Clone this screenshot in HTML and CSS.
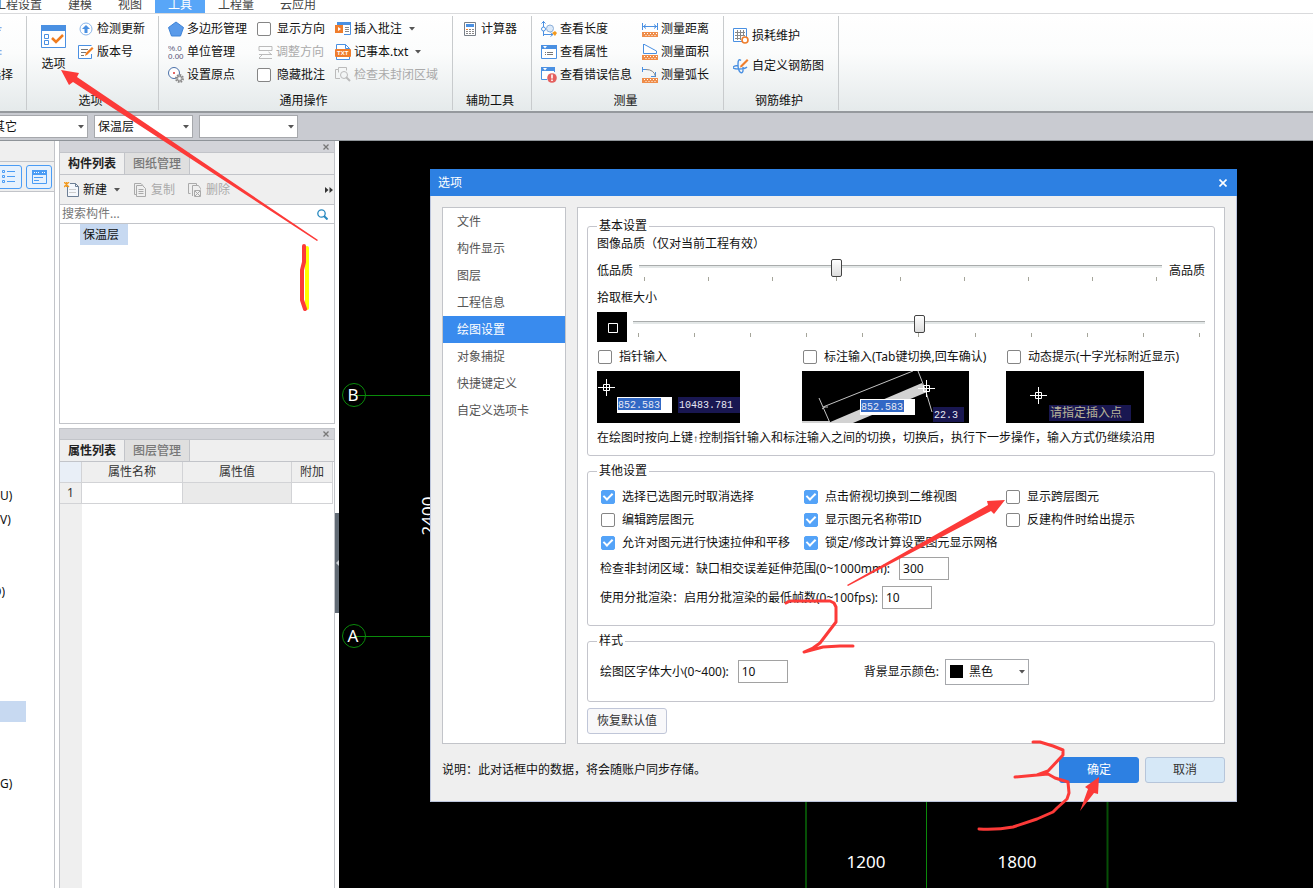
FILE: index.html
```html
<!DOCTYPE html>
<html lang="zh-CN">
<head>
<meta charset="utf-8">
<title>选项</title>
<link rel="stylesheet" href="styles.css">
</head>
<body>
<svg class="defs" aria-hidden="true">
  <symbol id="caret" viewBox="0 0 6 4"><path d="M0 0h6L3 3.500z" fill="#555"/></symbol>
  <symbol id="ruler" viewBox="0 0 16 16"><path d="M0 11h16v5H0z" fill="#ef8d4a"/><path d="M2 12.500h1M5 12.500h1M8 12.500h1M11 12.500h1M14 12.500h1M3.500 14.500h1M6.500 14.500h1M9.500 14.500h1M12.500 14.500h1" stroke="#fff"/></symbol>
  <symbol id="cross" viewBox="0 0 17 17"><path d="M8.500 0v17M0 8.500h17M5.500 5.500h6v6h-6z" fill="none" stroke="#fff"/></symbol>
</svg>

<nav class="menu">
  <button class="menu-tab">工程设置</button>
  <button class="menu-tab">建模</button>
  <button class="menu-tab">视图</button>
  <button class="menu-tab is-active">工具</button>
  <button class="menu-tab">工程量</button>
  <button class="menu-tab">云应用</button>
</nav>

<div class="ribbon">
  <section class="group group-cut">
    <div class="col">
      <button class="tool"><svg class="icon icon-cut" viewBox="0 0 16 16"><path d="M0 6.500h3M0 9.500h2" stroke="#4a90e2"/></svg></button>
      <button class="tool"><svg class="icon icon-cut" viewBox="0 0 16 16"><path d="M0 6.500h3M0 10.500h3" stroke="#4a90e2"/></svg></button>
      <button class="tool">选择</button>
    </div>
  </section>

  <section class="group">
    <div class="cols cols-wide">
      <button class="tool-big">
        <svg width="25" height="23" viewBox="0 0 25 23"><path d="M.5.5h24v22H.5z" fill="#fff" stroke="#4a90e2"/><path d="M0 0h25v6H0z" fill="#4a90e2"/><path d="M3.500 9.500h4v4h-4zM3.500 15.500h4v4h-4z" fill="none" stroke="#4a90e2"/><path d="M11 13l4 4 7-7" fill="none" stroke="#f07c1e" stroke-width="2.500"/></svg>
        选项
      </button>
      <div class="col">
        <button class="tool"><svg class="icon" viewBox="0 0 16 16"><circle cx="8" cy="8" r="6" fill="#fff" stroke="#8ab6ea"/><path d="M8 4l4 4H9.500v4h-3V8H4z" fill="#4a90e2"/></svg>检测更新</button>
        <button class="tool"><svg class="icon" viewBox="0 0 16 16"><path d="M13.500 10v4.500H.5v-13h13" fill="#fff" stroke="#4a90e2"/><path d="M3 5.500h7M3 8.500h5M3 11.500h3" stroke="#777"/><path d="M14 3l1.500 1.500-6 6L7 12l.8-3z" fill="#f07c1e"/></svg>版本号</button>
      </div>
    </div>
    <h2 class="group-name">选项</h2>
  </section>

  <section class="group">
    <div class="cols">
      <div class="col">
        <button class="tool"><svg class="icon" viewBox="0 0 16 16"><path d="M8 1l7.500 5.500-3 8.500h-9l-3-8.500z" fill="#5a9bea" stroke="#3f83d6"/></svg>多边形管理</button>
        <button class="tool"><svg class="icon" viewBox="0 0 16 16"><text class="glyph" x="0" y="7">%.0</text><text class="glyph" x="0" y="15">0.00</text></svg>单位管理</button>
        <button class="tool"><svg class="icon" viewBox="0 0 16 16"><circle cx="6" cy="6" r="5.500" fill="#fff" stroke="#4a70a8"/><circle cx="6" cy="6" r="1" fill="#d33"/><circle cx="11.500" cy="11.500" r="3.500" fill="#eee" stroke="#888" stroke-width="2" stroke-dasharray="1.600 1.100"/><circle cx="11.500" cy="11.500" r="2.500" fill="#ccc" stroke="#888"/><circle cx="11.500" cy="11.500" r="1" fill="#fff"/></svg>设置原点</button>
      </div>
      <div class="col">
        <label class="check tool-check"><input type="checkbox">显示方向</label>
        <button class="tool" disabled><svg class="icon" viewBox="0 0 16 16"><path d="M2 2.500h13v4H2zM2 10.500h13M11.500 8l3 2.500M5 11l-3 3M2 14.500h13" fill="none" stroke="#bbb"/></svg>调整方向</button>
        <label class="check tool-check"><input type="checkbox">隐藏批注</label>
      </div>
      <div class="col">
        <button class="tool"><svg class="icon" viewBox="0 0 16 16"><path d="M2 1.500h13.500v12H9" fill="#fff" stroke="#4a90e2"/><path d="M2 1h14v3H2z" fill="#4a90e2"/><path d="M10 6.500h4M10 8.500h4M10 10.500h4" stroke="#888"/><path d="M0 4h8v8H0z" fill="#ef7d2b"/><path d="M3 6l3 2-3 2z" fill="#fff"/></svg>插入批注<svg class="drop"><use href="#caret"/></svg></button>
        <button class="tool"><svg class="icon" viewBox="0 0 16 16"><path d="M1.500 15.500V.5h9l4 4v11z" fill="#fff" stroke="#4a90e2"/><path d="M10.500.5v4h4" fill="none" stroke="#4a90e2"/><rect y="5" width="16" height="8" rx="1" fill="#ef7d2b"/><text class="glyph-txt" x="2" y="11">TXT</text></svg>记事本.txt<svg class="drop"><use href="#caret"/></svg></button>
        <button class="tool" disabled><svg class="icon" viewBox="0 0 16 16"><path d="M5 11.500H.5v-9h3V.5h8v3M3.500 2.500v3" fill="none" stroke="#bbb"/><circle cx="9" cy="8" r="3.500" fill="none" stroke="#bbb"/><path d="M11 10l4 4" stroke="#bbb" stroke-width="2"/></svg>检查未封闭区域</button>
      </div>
    </div>
    <h2 class="group-name">通用操作</h2>
  </section>

  <section class="group">
    <div class="cols">
      <div class="col">
        <button class="tool"><svg class="icon" viewBox="0 0 16 16"><path d="M2.500 1.500h11v13h-11z" fill="#fff" stroke="#777f88"/><path d="M4 3h8v3H4z" fill="#4a90e2"/><path d="M4 8.500h2" stroke="#ef7d2b"/><path d="M7 8.500h2M10 8.500h2M4 10.500h2M4 12.500h2M7 10.500h2M10 10.500h2M7 12.500h2M10 12.500h2" stroke="#888"/></svg>计算器</button>
      </div>
    </div>
    <h2 class="group-name">辅助工具</h2>
  </section>

  <section class="group">
    <div class="cols">
      <div class="col">
        <button class="tool"><svg class="icon" viewBox="0 0 16 16"><path d="M2.500 0v15M.5 2.500l2-2 2 2M2 13.500h10M9.500 11.500l2.500 2-2.500 2" fill="none" stroke="#4a90e2"/><circle cx="2.500" cy="8" r="2" fill="#fff" stroke="#4a90e2"/><circle cx="9" cy="7.500" r="3.500" fill="#dce9f8" stroke="#8aaed8"/><path d="M11 12l3-2 2 2-2 3z" fill="#f39a1e"/></svg>查看长度</button>
        <button class="tool"><svg class="icon" viewBox="0 0 16 16"><path d="M.5 1.500h15v13H.5z" fill="#fff" stroke="#4a90e2"/><path d="M0 1h16v4H0z" fill="#4a90e2"/><path d="M2 2h4L4 4.500z" fill="#fff"/><path d="M4 8.500h1M4 10.500h1M6 8.500h6M6 10.500h6" stroke="#777"/></svg>查看属性</button>
        <button class="tool"><svg class="icon" viewBox="0 0 16 16"><path d="M6 12.500H.5V1h13v4" fill="#fff" stroke="#4a90e2"/><path d="M0 0h14v4H0z" fill="#4a90e2"/><path d="M2 1h4L4 3.500z" fill="#fff"/><circle cx="11" cy="11" r="4.800" fill="#e4605f"/><path d="M11 7.500v4M11 12.500v1.500" stroke="#fff" stroke-width="1.600"/></svg>查看错误信息</button>
      </div>
      <div class="col">
        <button class="tool"><svg class="icon" viewBox="0 0 16 16"><use href="#ruler" width="16" height="16"/><path d="M.5 2v7M15.500 2v7M1 5.500h14M4 3.500l-2.500 2L4 7.500M12 3.500l2.500 2-2.500 2" fill="none" stroke="#4a90e2"/></svg>测量距离</button>
        <button class="tool"><svg class="icon" viewBox="0 0 16 16"><use href="#ruler" width="16" height="16"/><path d="M1.500 0v9.500h13V7z" fill="#fff" stroke="#4a90e2"/></svg>测量面积</button>
        <button class="tool"><svg class="icon" viewBox="0 0 16 16"><use href="#ruler" width="16" height="16"/><path d="M.5 0v5M0 2.500h4M9 9.500h5M13.500 5v5" fill="none" stroke="#4a90e2"/><path d="M4 2.500q8 0 9.500 7" fill="none" stroke="#888"/></svg>测量弧长</button>
      </div>
    </div>
    <h2 class="group-name">测量</h2>
  </section>

  <section class="group">
    <div class="cols">
      <div class="col col-loose">
        <button class="tool"><svg class="icon" viewBox="0 0 16 16"><path d="M.5.5h13v13H.5z" fill="#fff" stroke="#4a90e2"/><path d="M4.500 2v10M7.500 2v10M10.500 2v6M2 4.500h10M2 7.500h10M2 10.500h6" stroke="#888"/><circle cx="12" cy="12" r="3" fill="#fff" stroke="#ef7d2b" stroke-width="1.600"/></svg>损耗维护</button>
        <button class="tool"><svg class="icon" viewBox="0 0 16 16"><path d="M8 2.500Q5 0 5 6t2 8 3-1V9M5 7.500Q0 8 0 9.500t6 1.500 8-2" fill="none" stroke="#4a90e2" stroke-width="1.400"/><path d="M14 1l1.500 1.500L9 9l-2 .5.500-2z" fill="#ef7d2b"/></svg>自定义钢筋图</button>
      </div>
    </div>
    <h2 class="group-name">钢筋维护</h2>
  </section>
</div>

<div class="filters">
  <span class="combo combo-cut"><select aria-label="类别"><option>其它</option></select><svg class="combo-caret"><use href="#caret"/></svg></span>
  <span class="combo"><select aria-label="构件类型"><option>保温层</option></select><svg class="combo-caret"><use href="#caret"/></svg></span>
  <span class="combo"><select aria-label="构件"><option></option></select><svg class="combo-caret"><use href="#caret"/></svg></span>
</div>

<main class="work">
  <aside class="side">
    <div class="side-head"></div>
    <div class="side-views">
      <button class="view" aria-label="列表"><svg width="14" height="14" viewBox="0 0 14 14"><path d="M.5.500h2v2h-2zM.5 5.500h2v2h-2zM.5 10.500h2v2h-2zM5 1.500h8M5 6.500h8M5 11.500h8" fill="none" stroke="#4a9cf5"/></svg></button>
      <button class="view" aria-label="详图"><svg width="15" height="14" viewBox="0 0 15 14"><path d="M.5.500h14v13H.5z" fill="none" stroke="#4a9cf5"/><path d="M0 0h15v5H0z" fill="#4a9cf5"/><path d="M2 2.500h6M10 2.500h3" stroke="#fff" stroke-dasharray="1 1"/><path d="M2 7.500h9M2 10.500h5" stroke="#4a9cf5"/></svg></button>
    </div>
    <ul class="tree">
      <li>U)</li>
      <li>V)</li>
      <li></li>
      <li></li>
      <li class="is-short"><span>D)</span></li>
      <li></li>
      <li></li>
      <li></li>
      <li></li>
      <li class="is-selected"></li>
      <li></li>
      <li></li>
      <li>G)</li>
    </ul>
  </aside>

  <div class="docks">
    <section class="dock">
      <header class="dock-bar"><button class="dock-close" aria-label="关闭"><svg width="6" height="6" viewBox="0 0 6 6"><path d="M.5.5l5 5M5.500.5l-5 5" stroke="#777" stroke-width="1.300"/></svg></button></header>
      <div class="tabs"><button class="tab is-active">构件列表</button><button class="tab">图纸管理</button></div>
      <div class="actions">
        <button class="action"><svg class="icon" viewBox="0 0 16 16"><path d="M3.500 4v10.500h11v-10l-3-3H6" fill="#f5f8fc" stroke="#6d7f95"/><path d="M11.500 1.500v3h3" fill="none" stroke="#6d7f95"/><path d="M5 7.500h7M5 10.500h7" stroke="#ccc"/><path d="M0 0l5 5M5 0L0 5M2.500 0v5" stroke="#f39a1e" stroke-width="1.300"/></svg>新建<svg class="drop"><use href="#caret"/></svg></button>
        <button class="action" disabled><svg class="icon" viewBox="0 0 16 16"><path d="M4.500 3.500h6l3 3v8h-9zM4 12.500H2.500v-11H9l2 2M6.500 7.500h5M6.500 9.500h5M6.500 11.500h5" fill="none" stroke="#aaa"/></svg>复制</button>
        <button class="action" disabled><svg class="icon" viewBox="0 0 16 16"><path d="M3.500 11.500h-2v-10h8v2M5.500 14V3.500h6l2 3v1" fill="none" stroke="#aaa"/><path d="M7.500 8.500h6v6h-6zM8 9l5 5M13 9l-5 5" fill="none" stroke="#aaa"/></svg>删除</button>
        <button class="action more" aria-label="更多"><svg width="8" height="6" viewBox="0 0 8 6"><path d="M0 0l3.500 3L0 6zM4.500 0L8 3 4.500 6z" fill="#333"/></svg></button>
      </div>
      <div class="search">
        <input type="text" placeholder="搜索构件..." aria-label="搜索构件">
        <svg width="11" height="11" viewBox="0 0 11 11"><circle cx="4.500" cy="4.500" r="3.700" fill="none" stroke="#2a8ac0" stroke-width="1.300"/><path d="M7 7l3.500 3.500" stroke="#2a8ac0" stroke-width="2"/></svg>
      </div>
      <ul class="parts"><li>保温层</li></ul>
    </section>

    <section class="dock dock-props">
      <header class="dock-bar"><button class="dock-close" aria-label="关闭"><svg width="6" height="6" viewBox="0 0 6 6"><path d="M.5.5l5 5M5.500.5l-5 5" stroke="#777" stroke-width="1.300"/></svg></button></header>
      <div class="tabs"><button class="tab is-active">属性列表</button><button class="tab">图层管理</button></div>
      <div class="props-area">
        <table class="props">
          <colgroup><col class="c-num"><col class="c-name"><col class="c-value"><col class="c-extra"></colgroup>
          <thead><tr><th class="corner"></th><th>属性名称</th><th>属性值</th><th>附加</th></tr></thead>
          <tbody><tr><th>1</th><td></td><td class="is-locked"></td><td></td></tr></tbody>
        </table>
      </div>
    </section>
  </div>

  <button class="splitter" aria-label="折叠"><svg width="3" height="6" viewBox="0 0 3 6"><path d="M3 0v6L0 3z" fill="#cfd3d8"/></svg></button>

  <div class="canvas">
    <svg class="drawing">
      <g fill="none" stroke="#0a8a0a">
        <circle cx="15" cy="254" r="11.500"/><path d="M15 254.500h82"/>
        <circle cx="15" cy="495" r="11.500"/><path d="M15 495.500h82"/>
        <path d="M467 655v400M768.500 655v400" stroke="#064f06" stroke-width="2"/>
        <path d="M587.500 655v400"/>
      </g>
      <g class="drawing-text">
        <text x="14" y="260">B</text>
        <text x="14" y="501">A</text>
        <text x="527" y="727">1200</text>
        <text x="678" y="727">1800</text>
        <text transform="translate(95 375) rotate(-90)">2400</text>
      </g>
    </svg>

    <section class="dialog" role="dialog" aria-label="选项">
      <header class="dialog-title">选项<button class="dialog-close" aria-label="关闭"><svg width="8" height="8" viewBox="0 0 8 8"><path d="M.5.5l7 7M7.500.5l-7 7" stroke="#fff" stroke-width="1.600"/></svg></button></header>
      <div class="dialog-body">
        <nav class="pages">
          <button class="page">文件</button>
          <button class="page">构件显示</button>
          <button class="page">图层</button>
          <button class="page">工程信息</button>
          <button class="page is-active">绘图设置</button>
          <button class="page">对象捕捉</button>
          <button class="page">快捷键定义</button>
          <button class="page">自定义选项卡</button>
        </nav>
        <div class="settings">
          <fieldset class="box basic">
            <legend>基本设置</legend>
            <div class="line">图像品质（仅对当前工程有效）</div>
            <div class="quality">
              <span>低品质</span>
              <div class="slider"><input type="range" min="0" max="8" value="3" aria-label="图像品质"><div class="ticks"><i></i><i></i><i></i><i></i><i></i><i></i><i></i><i></i><i></i></div></div>
              <span>高品质</span>
            </div>
            <div class="line">拾取框大小</div>
            <div class="pick">
              <svg width="30" height="30" viewBox="0 0 30 30"><path d="M0 0h30v30H0z"/><path d="M11.500 11.500h9v9h-9z" fill="none" stroke="#fff"/></svg>
              <div class="slider"><input type="range" min="0" max="10" value="5" aria-label="拾取框大小"><div class="ticks"><i></i><i></i><i></i><i></i><i></i><i></i><i></i><i></i><i></i><i></i><i></i></div></div>
            </div>
            <div class="inputs">
              <div class="mode">
                <label class="check"><input type="checkbox">指针输入</label>
                <svg width="143" height="52" viewBox="0 0 143 52"><path d="M0 0h143v52H0z"/><use href="#cross" x="1" y="8" width="17" height="17"/><path d="M20 26h55v16H20z" fill="#fff"/><path d="M21 27h43v12H21z" fill="#3168c5"/><path d="M81 26h62v16H81z" fill="#191751"/><text class="readout" x="21" y="37">852.583</text><text class="readout" x="82" y="37">10483.781</text></svg>
              </div>
              <div class="mode">
                <label class="check"><input type="checkbox">标注输入(Tab键切换,回车确认)</label>
                <svg width="167" height="52" viewBox="0 0 167 52"><path d="M0 0h167v52H0z"/><path d="M120 12l5 9-74 31H26z" fill="#d2d2d2"/><path d="M0 51h28" stroke="#d2d2d2" stroke-width="2"/><path d="M111 0L21 36M116 0q8 18 14 41M17 27l11 25M20 38q3-3 6-2" fill="none" stroke="#c4c4c4"/><use href="#cross" x="116" y="9" width="17" height="17"/><path d="M58 28h55v16H58z" fill="#fff"/><path d="M59 29h43v12H59z" fill="#3168c5"/><path d="M131 36h31v15h-31z" fill="#191751"/><text class="readout" x="59" y="39">852.583</text><text class="readout" x="132" y="47">22.3</text></svg>
              </div>
              <div class="mode">
                <label class="check"><input type="checkbox">动态提示(十字光标附近显示)</label>
                <svg width="138" height="52" viewBox="0 0 138 52"><path d="M0 0h138v52H0z"/><use href="#cross" x="24" y="16" width="17" height="17"/><path d="M43 34h82v16H43z" fill="#191751"/><text class="hint" x="44" y="46">请指定插入点</text></svg>
              </div>
            </div>
            <div class="line line-note">在绘图时按向上键<span class="arrow">↑</span>控制指针输入和标注输入之间的切换，切换后，执行下一步操作，输入方式仍继续沿用</div>
          </fieldset>

          <fieldset class="box other">
            <legend>其他设置</legend>
            <div class="flags">
              <label class="check"><input type="checkbox" checked>选择已选图元时取消选择</label>
              <label class="check"><input type="checkbox" checked>点击俯视切换到二维视图</label>
              <label class="check"><input type="checkbox">显示跨层图元</label>
              <label class="check"><input type="checkbox">编辑跨层图元</label>
              <label class="check"><input type="checkbox" checked>显示图元名称带ID</label>
              <label class="check"><input type="checkbox">反建构件时给出提示</label>
              <label class="check"><input type="checkbox" checked>允许对图元进行快速拉伸和平移</label>
              <label class="check"><input type="checkbox" checked>锁定/修改计算设置图元显示网格</label>
            </div>
            <div class="field field-wide"><label for="gap">检查非封闭区域：缺口相交误差延伸范围(0~1000mm):</label><input id="gap" class="num" type="text" value="300"></div>
            <div class="field field-tight"><label for="fps">使用分批渲染：启用分批渲染的最低帧数(0~100fps):</label><input id="fps" class="num" type="text" value="10"></div>
          </fieldset>

          <fieldset class="box style">
            <legend>样式</legend>
            <div class="style-row">
              <div class="field field-wide"><label for="font">绘图区字体大小(0~400):</label><input id="font" class="num" type="text" value="10"></div>
              <div class="field"><label for="bg">背景显示颜色:</label><span class="combo combo-color"><select id="bg"><option>黑色</option></select><i class="swatch"></i><svg class="combo-caret"><use href="#caret"/></svg></span></div>
            </div>
          </fieldset>
          <button class="btn">恢复默认值</button>
        </div>
      </div>
      <footer class="dialog-foot">
        <span class="foot-note">说明：此对话框中的数据，将会随账户同步存储。</span>
        <button class="btn btn-primary">确定</button>
        <button class="btn btn-cancel">取消</button>
      </footer>
    </section>
  </div>
</main>

<svg class="marks" aria-hidden="true">
  <g fill="#fc3a38">
    <path d="M61 70l18 3-2 4 241 163-1 1L73 82l-4 3z"/>
    <path d="M1005 500l-11 14-3-3-143 75-1-1 141-80-1-4z"/>
    <path d="M1099 777l-1 17-4-1-14 18 8-22-3-2z"/>
  </g>
  <path d="M307 248v60" stroke="#ffff00" stroke-width="4" stroke-linecap="round"/>
  <g fill="none" stroke="#fc3a38" stroke-width="3" stroke-linecap="round" stroke-linejoin="round">
    <path d="M304 246v16l-2 8v30l3 9" stroke-width="4"/>
    <path d="M786 603l4-2h40l4 2 2 4v15l-16 21-7 5-9 4 19-5 17-1h13"/>
    <path d="M1033 742h7l13 4 10 4v5l-15 16-11 4-22 2 33-3 7 4 13 4 1 11-2 6-10 9-4 4-16 7-24 8q-16 3-34 2"/>
  </g>
</svg>
</body>
</html>
```

FILE: styles.css
```css
* { box-sizing: border-box; }

body {
  margin: 0;
  position: relative;
  display: flex;
  flex-direction: column;
  height: 100vh;
  overflow: hidden;
  background: #fff;
  color: #111;
  font: 12px/18px "Noto Sans", "Noto Sans CJK SC", sans-serif;
}

button, input, select {
  margin: 0;
  padding: 0;
  border: 0;
  background: none;
  color: inherit;
  font: inherit;
}

button { white-space: nowrap; }
svg { flex: none; }
ul { margin: 0; padding: 0; list-style: none; }

.defs { position: absolute; width: 0; height: 0; }

/* Menu */
.menu {
  display: flex;
  align-items: flex-end;
  flex: none;
  height: 14px;
  margin-left: -19px;
  border-bottom: 1px solid #d9dadc;
}
.menu-tab { padding: 0 13px; line-height: 16px; color: #444; }
.menu-tab.is-active { background: #58a6f8; color: #fff; }

/* Ribbon */
.ribbon {
  display: flex;
  flex: none;
  height: 99px;
  padding: 2px 0 1px;
  border-bottom: 2px solid #95999d;
  background: linear-gradient(#fff 0%, #fbfcfc 40%, #e5eaeb 100%);
}
.group {
  display: flex;
  flex-direction: column;
  justify-content: space-between;
  padding: 1px 13px 0 9px;
  border-right: 1px solid #c8cbcd;
}
.group-cut { width: 27px; padding: 1px 13px 0 0; align-items: flex-end; }
.group-cut .col { align-items: flex-end; }
.group-name { margin: 0; font-size: 12px; font-weight: 400; line-height: 18px; text-align: center; }
.cols { display: flex; gap: 10px; padding-right: 1px; }
.cols-wide { gap: 12px; padding: 0 0 0 5px; }
.col { display: flex; flex-direction: column; align-items: flex-start; }
.col-loose { padding-top: 7px; gap: 7px; }
.tool { display: flex; align-items: center; gap: 3px; height: 23px; }
.tool:disabled, .action:disabled { color: #aaa; }
.tool-big { display: flex; flex-direction: column; align-items: center; gap: 7px; padding-top: 8px; }
.icon { width: 16px; height: 16px; }
.icon-cut { width: 14px; }
.drop { width: 6px; height: 4px; margin-left: 4px; }
.glyph { font: 8px "Liberation Sans", sans-serif; fill: #557; }
.glyph-txt { font: bold 6px "Liberation Sans", sans-serif; fill: #fff; }

.check { display: flex; align-items: center; gap: 7px; white-space: nowrap; }
.check input {
  appearance: none;
  flex: none;
  display: grid;
  place-items: center;
  width: 14px;
  height: 14px;
  border: 1px solid #858585;
  border-radius: 2px;
  background: #fff;
}
.check input:checked { border-color: #54a3f8; background: #54a3f8; }
.check input:checked::before {
  content: "";
  width: 4px;
  height: 7px;
  margin-bottom: 2px;
  border: solid #fff;
  border-width: 0 2px 2px 0;
  transform: rotate(45deg);
}
.tool-check { gap: 6px; height: 23px; }

/* Filter bar */
.filters {
  display: flex;
  align-items: center;
  gap: 6px;
  flex: none;
  height: 28px;
  border-bottom: 1px solid #8f9499;
  background: #c9cbd1;
}
.combo { display: grid; align-items: center; width: 99px; height: 23px; }
.combo > * { grid-area: 1 / 1; }
.combo select {
  appearance: none;
  width: 100%;
  height: 100%;
  padding: 0 16px 0 3px;
  border: 1px solid #a6a8ac;
  background: #fff;
}
.combo-caret { justify-self: end; width: 6px; height: 4px; margin-right: 4px; pointer-events: none; }
.combo-cut { margin-left: -11px; }

/* Work area */
.work { display: flex; flex: 1; min-height: 0; background: #fff; }

.side {
  display: flex;
  flex-direction: column;
  flex: none;
  width: 55px;
  border-right: 1px solid #c2c4c9;
}
.side-head { height: 21px; border-bottom: 1px solid #c2c4c9; background: #efefef; }
.side-views {
  display: flex;
  align-items: center;
  gap: 4px;
  height: 30px;
  margin-left: -4px;
  border-bottom: 1px solid #c2c4c9;
  background: #efefef;
}
.view {
  display: grid;
  place-items: center;
  width: 26px;
  height: 24px;
  border: 1px solid #4a9cf5;
  border-radius: 3px;
  background: #e6f1fd;
}
.tree { padding-top: 292px; }
.tree li { height: 24px; line-height: 24px; overflow: hidden; }
.tree .is-short { display: flex; justify-content: flex-end; width: 5px; }
.tree .is-selected { width: 26px; height: 21px; margin: 1px 0 2px; background: #c7d9f1; }

.docks { display: flex; flex-direction: column; gap: 4px; flex: none; width: 276px; margin-left: 4px; }
.dock { display: flex; flex-direction: column; flex: none; height: 283px; border: 1px solid #c2c4c9; border-top: 0; }
.dock-bar { display: flex; align-items: center; justify-content: flex-end; flex: none; height: 12px; padding-right: 5px; border-bottom: 1px solid #c2c4c9; background: #d3d4d9; }
.dock-props { flex: 1; height: auto; border-bottom: 0; border-top: 1px solid #c2c4c9; }
.dock-props .dock-bar { height: 11px; }
.dock-close { display: flex; }
.tabs { display: flex; flex: none; height: 22px; border-bottom: 1px solid #c2c4c9; background: #efefef; }
.tab { padding: 0 8px; border-right: 1px solid #c2c4c9; background: #dfdfdf; color: #777; font-weight: 500; }
.tab.is-active { background: #efefef; color: #222; font-weight: 700; }
.actions { display: flex; align-items: center; gap: 12px; flex: none; height: 30px; padding: 0 1px 0 4px; border-bottom: 1px solid #c2c4c9; background: #efefef; }
.action { display: flex; align-items: center; gap: 3px; }
.action.more { margin-left: auto; }
.search { display: flex; align-items: center; flex: none; height: 19px; padding: 0 6px 0 2px; border-bottom: 1px solid #c2c4c9; }
.search input { flex: 1; min-width: 0; outline: 0; }
.search input::placeholder { color: #777; opacity: 1; }
.parts li { width: 48px; margin-left: 20px; padding-left: 3px; line-height: 21px; background: #c7d9f1; }

.props-area { flex: 1; background: linear-gradient(90deg, #efefef 22px, #fff 22px); }
.props { width: 273px; border-collapse: separate; border-spacing: 0; table-layout: fixed; }
.c-num { width: 22px; }
.c-name { width: 101px; }
.c-value { width: 109px; }
.c-extra { width: 41px; }
.props th, .props td { height: 21px; padding: 0; border-right: 1px solid #d2d3d6; border-bottom: 1px solid #d2d3d6; color: #333; font-weight: 400; line-height: 20px; background: #efefef; }
.props td { background: #fff; }
.props .corner { background: #e9eff7; }
.props .is-locked { background: #eaeaea; }

.splitter { display: grid; place-items: center end; flex: none; width: 4px; height: 100px; margin-top: 372px; background: #626b75; }

.canvas { position: relative; flex: 1; min-width: 0; overflow: hidden; background: #000; }
.drawing { display: block; width: 100%; height: 100%; }
.drawing-text { fill: #fff; font-size: 17px; text-anchor: middle; }

/* Options window, floating over the drawing */
.dialog {
  position: absolute;
  top: 28px;
  left: 91px;
  right: 76px;
  min-width: 760px;
  border: 1px solid #bcc5dc;
  border-top: 0;
  background: #efefef;
}
.dialog-title {
  display: flex;
  align-items: center;
  justify-content: space-between;
  height: 27px;
  margin: 0 -1px;
  padding: 0 10px 0 8px;
  background: #2d80e2;
  color: #fff;
}
.dialog-close { display: flex; }
.dialog-body { display: flex; gap: 11px; padding: 11px 11px 0; }
.pages { display: flex; flex-direction: column; flex: none; width: 124px; border: 1px solid #c2c4c9; background: #fff; }
.page { height: 27px; padding-left: 14px; text-align: left; color: #555; }
.page.is-active { background: #398bee; color: #fff; }
.settings { flex: 1; min-width: 0; padding: 10px 9px 9px; border: 1px solid #c2c4c9; background: #fff; }

.box { min-width: 0; margin: 0 0 7px; padding: 0 9px; border: 1px solid #c4c5cc; border-radius: 3px; }
.box legend { padding: 0 2px; line-height: 16px; }
.basic { display: grid; gap: 5px; padding-top: 1px; padding-bottom: 7px; }
.line { white-space: nowrap; }
.line-note { height: 20px; line-height: 20px; }
.arrow { font: 10px/10px "Liberation Mono", monospace; }
.quality { display: flex; align-items: center; gap: 6px; height: 26px; }
.pick { display: flex; align-items: center; gap: 6px; }
.slider { flex: 1; min-width: 0; }
.slider input {
  appearance: none;
  display: block;
  width: 100%;
  height: 18px;
  background: linear-gradient(#a9acac 1px, #e3e7e7 1px) 0 6px / 100% 3px no-repeat;
}
.slider input::-webkit-slider-thumb {
  appearance: none;
  width: 11px;
  height: 18px;
  border: 1px solid #444;
  border-radius: 2px;
  background: linear-gradient(#fff, #ddd);
}
.ticks { display: flex; justify-content: space-between; height: 7px; padding: 0 5px; }
.ticks i { width: 1px; height: 4px; background: #a5a59a; }
.quality span:last-child { margin-left: 1px; }
.inputs { display: grid; grid-template-columns: 205px 204px 1fr; }
.mode { display: grid; gap: 5px; }
.mode .check { height: 19px; padding-left: 1px; }
.readout { fill: #e8e8f4; font: 10px "Liberation Mono", monospace; }
.hint { fill: #b9b59a; }

.other { padding: 6px 12px 13px; }
.other legend, .style legend { margin-left: -3px; }
.flags { display: grid; grid-template-columns: 203px 202px 1fr; grid-auto-rows: 23px; padding-left: 1px; }
.field { display: flex; align-items: center; gap: 6px; height: 29px; white-space: nowrap; }
.field-wide { gap: 9px; }
.field-tight { gap: 4px; }
.num { width: 50px; height: 23px; padding: 0 3px; border: 1px solid #a2a2a2; background: #fff; }
.style { margin-bottom: 6px; padding: 8px 12px 15px; }
.style-row { display: flex; gap: 76px; }
.combo-color { width: 84px; height: 26px; }
.combo-color select { padding-left: 23px; }
.swatch { width: 13px; height: 13px; margin-left: 5px; background: #000; pointer-events: none; }

.btn { height: 26px; padding: 0 9px; border: 1px solid #c0c6d8; border-radius: 3px; background: #f8f8fa; color: #333; }
.btn-primary { width: 80px; border-color: #2d80e2; background: #2d80e2; color: #fff; }
.btn-cancel { width: 80px; border-color: #b6c5da; background: #d6e8f7; }
.dialog-foot { display: flex; align-items: center; gap: 6px; padding: 13px 11px 18px; }
.foot-note { flex: 1; }

/* Hand-drawn notes over the whole window */
.marks { position: absolute; inset: 0; width: 100%; height: 100%; pointer-events: none; }
```
